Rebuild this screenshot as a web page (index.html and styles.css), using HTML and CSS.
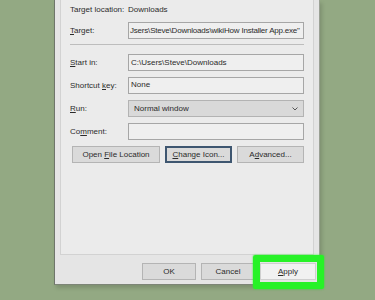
FILE: index.html
```html
<!DOCTYPE html>
<html lang="en">
<head>
    <meta charset="UTF-8">
    <meta name="viewport" content="width=device-width, initial-scale=1.0">
    <title>Shortcut Properties</title>
    <link rel="stylesheet" href="styles.css">
</head>
<body>
    <div class="window">
        <div class="panel">
            <div class="row info">
                <span class="label">Target location:</span>
                <span>Downloads</span>
            </div>
            <div class="row">
                <span class="label"><u>T</u>arget:</span>
                <div class="field tight">Jsers\Steve\Downloads\wikiHow Installer App.exe"</div>
            </div>
            <div class="sep"></div>
            <div class="fields">
                <div class="row">
                    <span class="label"><u>S</u>tart in:</span>
                    <div class="field">C:\Users\Steve\Downloads</div>
                </div>
                <div class="row">
                    <span class="label">Shortcut <u>k</u>ey:</span>
                    <div class="field top">None</div>
                </div>
                <div class="row">
                    <span class="label"><u>R</u>un:</span>
                    <div class="field select">
                        <span>Normal window</span>
                        <svg width="6" height="4" viewBox="0 0 6 4"><path d="M0.5 0.5 L3 3 L5.5 0.5" fill="none" stroke="#555" stroke-width="1"/></svg>
                    </div>
                </div>
                <div class="row">
                    <span class="label">Co<u>m</u>ment:</span>
                    <div class="field"></div>
                </div>
                <div class="actions">
                    <button class="btn w-open">Open <u>F</u>ile Location</button>
                    <button class="btn w-icon focused"><u>C</u>hange Icon...</button>
                    <button class="btn w-adv">A<u>d</u>vanced...</button>
                </div>
            </div>
        </div>
        <div class="footer">
            <button class="btn w-ok">OK</button>
            <button class="btn w-ok">Cancel</button>
            <button class="btn w-apply apply"><u>A</u>pply<span class="highlight"></span></button>
        </div>
    </div>
</body>
</html>
```

FILE: styles.css
```css
body {
    margin: 0;
    height: 300px;
    overflow: hidden;
    background-color: #93a983;
    font-family: "Liberation Sans", Arial, sans-serif;
    font-size: 8px;
    color: #2b2b2b;
}
.window {
    margin-left: 54px;
    width: 264px;
    background-color: #e5e5e5;
    border-left: 1px solid #6f766b;
    border-right: 1px solid #9aa094;
    border-bottom: 1px solid #7d8577;
    box-shadow: 2px 3px 4px rgba(0, 0, 0, 0.15);
}
.panel {
    margin: 0 5px;
    height: 255px;
    background-color: #ebebeb;
    border-left: 1px solid #d2d2d2;
    border-right: 1px solid #d2d2d2;
    border-bottom: 1px solid #d2d2d2;
    padding: 2px 9px 0 9px;
    box-sizing: border-box;
}
.row {
    display: flex;
    align-items: center;
    height: 17px;
}
.info {
    height: 15px;
    margin-bottom: 5px;
}
.label {
    width: 58px;
    flex: none;
}
.field {
    width: 176px;
    height: 17px;
    box-sizing: border-box;
    border: 1px solid #a6a6a6;
    background-color: #efefef;
    padding: 0 2px;
    display: flex;
    align-items: center;
    white-space: nowrap;
    overflow: hidden;
}
.field.tight {
    padding: 0 1px;
    letter-spacing: -0.2px;
}
.field.top {
    align-items: flex-start;
    padding-top: 2px;
}
.field.select {
    background-color: #d9d9d9;
    border-color: #b3b3b3;
    justify-content: space-between;
    padding: 0 5px 0 5px;
}
.sep {
    height: 1px;
    width: 234px;
    background-color: #bdbdbd;
    margin: 5px 0 9px 0;
}
.fields {
    display: flex;
    flex-direction: column;
    gap: 6px;
}
.actions {
    display: flex;
    gap: 5px;
    margin-left: 2px;
}
.btn {
    height: 17px;
    padding: 0;
    font-family: inherit;
    font-size: 8px;
    color: #2b2b2b;
    background-color: #dadada;
    border: 1px solid #b4b4b4;
    box-sizing: border-box;
}
.btn.focused {
    border: 2px solid #3e5670;
}
.w-open { width: 88px; }
.w-icon { width: 67px; }
.w-adv { width: 67px; }
.w-ok { width: 54px; }
.w-apply { width: 56px; }
.footer {
    display: flex;
    justify-content: flex-end;
    gap: 5px;
    padding: 8px 3px 4px 0;
}
.apply {
    position: relative;
    background-color: #f1f1f1;
    border-color: #cfcfcf;
}
.highlight {
    position: absolute;
    left: -8px;
    right: -9px;
    top: -9px;
    bottom: -10px;
    border: 7px solid #27f227;
    border-radius: 2px;
    box-shadow: 0 0 2px #27f227;
}
```
